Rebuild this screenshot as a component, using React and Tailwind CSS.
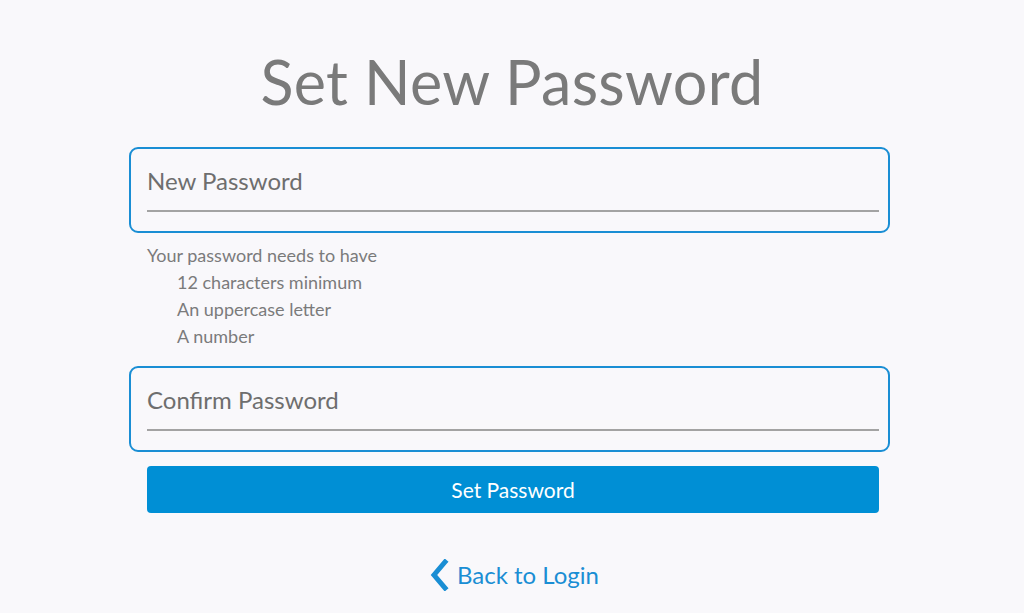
const PasswordField = ({ label }) => {
  return (
    <div className="w-[761px] h-[86px] rounded-[9px] border-2 border-[#1a8ed4] pl-[16px] pr-[9px] pt-[17px]">
      <div className="text-[24px] leading-[30px] text-[#6e6e6e]">{label}</div>
      <div className="mt-[14px] h-[2px] bg-[#a3a3a3]" />
    </div>
  );
};

const App = () => {
  const rules = ["12 characters minimum", "An uppercase letter", "A number"];

  return (
    <div
      className="min-h-[613px] w-full bg-[#f9f8fb]"
      style={{ fontFamily: "Lato, 'Open Sans', sans-serif" }}
    >
      {/* Title */}
      <h1 className="pt-[47px] text-center text-[61px] leading-[70px] text-[#7a7a7a] font-normal tracking-[0.3px]">
        Set New Password
      </h1>

      <div className="ml-[129px] w-[761px] mt-[30px]">
        <PasswordField label="New Password" />

        {/* Requirements */}
        <div className="pl-[18px] pt-[9px] text-[18px] leading-[27px] text-[#7b7b7b]">
          <p>Your password needs to have</p>
          <ul className="pl-[30px]">
            {rules.map((rule) => (
              <li key={rule}>{rule}</li>
            ))}
          </ul>
        </div>

        <div className="mt-[16px]">
          <PasswordField label="Confirm Password" />
        </div>

        <button
          type="button"
          className="ml-[18px] mt-[14px] w-[732px] h-[47px] rounded-[4px] bg-[#008fd5] text-white text-[21px]"
        >
          Set Password
        </button>
      </div>

      {/* Back link */}
      <div className="mt-[46px] flex items-center justify-center gap-[8px] pl-[4px] text-[#1a8ed4]">
        <svg width="20" height="32" viewBox="0 0 20 32" fill="none">
          <path d="M16 3 L5 16 L16 29" stroke="#1a8ed4" strokeWidth="5" strokeLinecap="square" strokeLinejoin="miter" />
        </svg>
        <span className="text-[24px] leading-[30px]">Back to Login</span>
      </div>
    </div>
  );
};

export default App;
